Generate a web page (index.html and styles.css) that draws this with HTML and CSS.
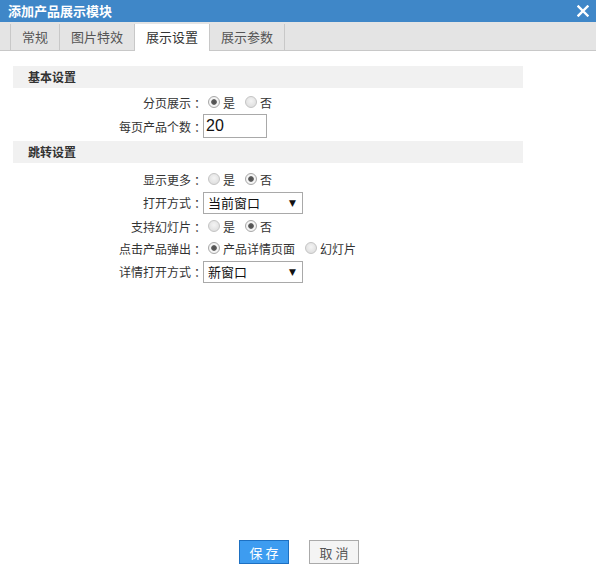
FILE: index.html
```html
<!DOCTYPE html>
<html lang="zh-CN">
<head>
<meta charset="utf-8">
<title>添加产品展示模块</title>
<link rel="stylesheet" href="styles.css">
</head>
<body>
<div class="dialog">
  <div class="titlebar">
    <span class="title">添加产品展示模块</span>
    <span class="close" aria-label="关闭">
      <svg width="12" height="12" viewBox="0 0 12 12"><path d="M1.5 1.5 L10.5 10.5 M10.5 1.5 L1.5 10.5" stroke="#fff" stroke-width="2.4" stroke-linecap="square"/></svg>
    </span>
  </div>
  <div class="tabs">
    <span class="tab">常规</span>
    <span class="tab">图片特效</span>
    <span class="tab active">展示设置</span>
    <span class="tab">展示参数</span>
  </div>
  <div class="content">
    <div class="section">
      <div class="sec-head">基本设置</div>
      <div class="rows first">
        <div class="row">
          <span class="lbl">分页展示<span class="colon">：</span></span>
          <label class="opt"><input type="radio" name="page" checked>是</label>
          <label class="opt"><input type="radio" name="page">否</label>
        </div>
        <div class="row tall">
          <span class="lbl">每页产品个数<span class="colon">：</span></span>
          <input class="num" type="text" value="20">
        </div>
      </div>
    </div>
    <div class="section">
      <div class="sec-head">跳转设置</div>
      <div class="rows second">
        <div class="row">
          <span class="lbl">显示更多<span class="colon">：</span></span>
          <label class="opt"><input type="radio" name="more">是</label>
          <label class="opt"><input type="radio" name="more" checked>否</label>
        </div>
        <div class="row sel-row">
          <span class="lbl">打开方式<span class="colon">：</span></span>
          <span class="select"><span class="sel-text">当前窗口</span><span class="arrow">▼</span></span>
        </div>
        <div class="row">
          <span class="lbl">支持幻灯片<span class="colon">：</span></span>
          <label class="opt"><input type="radio" name="slide">是</label>
          <label class="opt"><input type="radio" name="slide" checked>否</label>
        </div>
        <div class="row">
          <span class="lbl">点击产品弹出<span class="colon">：</span></span>
          <label class="opt"><input type="radio" name="pop" checked>产品详情页面</label>
          <label class="opt"><input type="radio" name="pop">幻灯片</label>
        </div>
        <div class="row sel-row">
          <span class="lbl">详情打开方式<span class="colon">：</span></span>
          <span class="select"><span class="sel-text">新窗口</span><span class="arrow">▼</span></span>
        </div>
      </div>
    </div>
  </div>
  <div class="footer">
    <button class="btn primary">保 存</button>
    <button class="btn">取 消</button>
  </div>
</div>
</body>
</html>
```
FILE: styles.css
```css
* { box-sizing: border-box; }
html, body { margin: 0; padding: 0; }
body {
  width: 596px;
  height: 575px;
  background: #fff;
  font-family: "Noto Sans CJK SC", "Microsoft YaHei", sans-serif;
  font-size: 12px;
  color: #333;
  overflow: hidden;
}
.dialog {
  height: 575px;
  display: flex;
  flex-direction: column;
}
.titlebar {
  height: 22px;
  background: #3f87c8;
  display: flex;
  align-items: center;
  justify-content: space-between;
  padding: 0 7px 0 8px;
}
.title {
  color: #fff;
  font-weight: bold;
  font-size: 13px;
  line-height: 22px;
}
.close {
  display: flex;
  width: 12px;
  height: 12px;
}
.tabs {
  height: 29px;
  background: #e4e4e4;
  border-bottom: 1px solid #c8c8c8;
  display: flex;
  align-items: flex-end;
  padding-left: 10px;
}
.tab {
  height: 26px;
  line-height: 25px;
  padding: 0 11px;
  font-size: 13px;
  color: #555;
  border-left: 1px solid #c8c8c8;
}
.tab:last-child { border-right: 1px solid #c8c8c8; }
.tab.active {
  background: #fff;
  color: #333;
  height: 27px;
  margin-bottom: -1px;
  border-right: 1px solid #c8c8c8;
}
.tab.active + .tab { border-left: none; }
.content {
  flex: 1;
  padding: 15px 0 0 13px;
}
.section { width: 510px; }
.sec-head {
  height: 22px;
  line-height: 22px;
  background: #f1f1f1;
  padding-left: 15px;
  font-weight: bold;
  color: #333;
}
.rows.first { padding-top: 3px; margin-bottom: 2px; }
.rows.second { padding-top: 5px; }
.row {
  display: flex;
  align-items: center;
  height: 22px;
}
.row.tall { height: 26px; }
.row.sel-row { height: 25px; }
.lbl {
  width: 190px;
  text-align: right;
  color: #333;
}
.colon {
  display: inline-block;
  padding-left: 3px;
  margin-right: -3px;
}
.opt {
  display: flex;
  align-items: center;
  margin-right: 5px;
  color: #333;
}
.opt input {
  appearance: none;
  -webkit-appearance: none;
  width: 12px;
  height: 12px;
  margin: 0 3px 0 5px;
  border-radius: 50%;
  border: 1px solid #c4c4c4;
  background: radial-gradient(circle at 50% 40%, #f4f4f4 0, #d9d9d9 100%);
}
.opt input:checked {
  border-color: #a8a8a8;
  background: radial-gradient(circle, #4f4f4f 0, #5c5c5c 2.4px, #f6f6f6 3.2px, #ececec 100%);
}
.num {
  width: 64px;
  height: 24px;
  border: 1px solid #a9a9a9;
  padding: 0 2px;
  font-family: "Liberation Sans", Arial, sans-serif;
  font-size: 16px;
  color: #111;
  outline: none;
}
.select {
  width: 100px;
  height: 22px;
  border: 1px solid #a9a9a9;
  display: flex;
  align-items: center;
  justify-content: space-between;
  padding: 0 6px 0 4px;
  background: #fff;
}
.sel-text {
  font-size: 13px;
  color: #111;
}
.arrow {
  font-size: 9px;
  color: #111;
  font-family: "DejaVu Sans", sans-serif;
}
.footer {
  display: flex;
  justify-content: center;
  gap: 20px;
  padding: 0 0 11px 2px;
}
.btn {
  width: 50px;
  height: 24px;
  padding: 0;
  font-family: "Noto Sans CJK SC", sans-serif;
  font-size: 13px;
  border: 1px solid #aaa;
  background: #f4f4f4;
  color: #555;
}
.btn.primary {
  background: #3d9cf0;
  border-color: #1d70c2;
  color: #fff;
}
```
